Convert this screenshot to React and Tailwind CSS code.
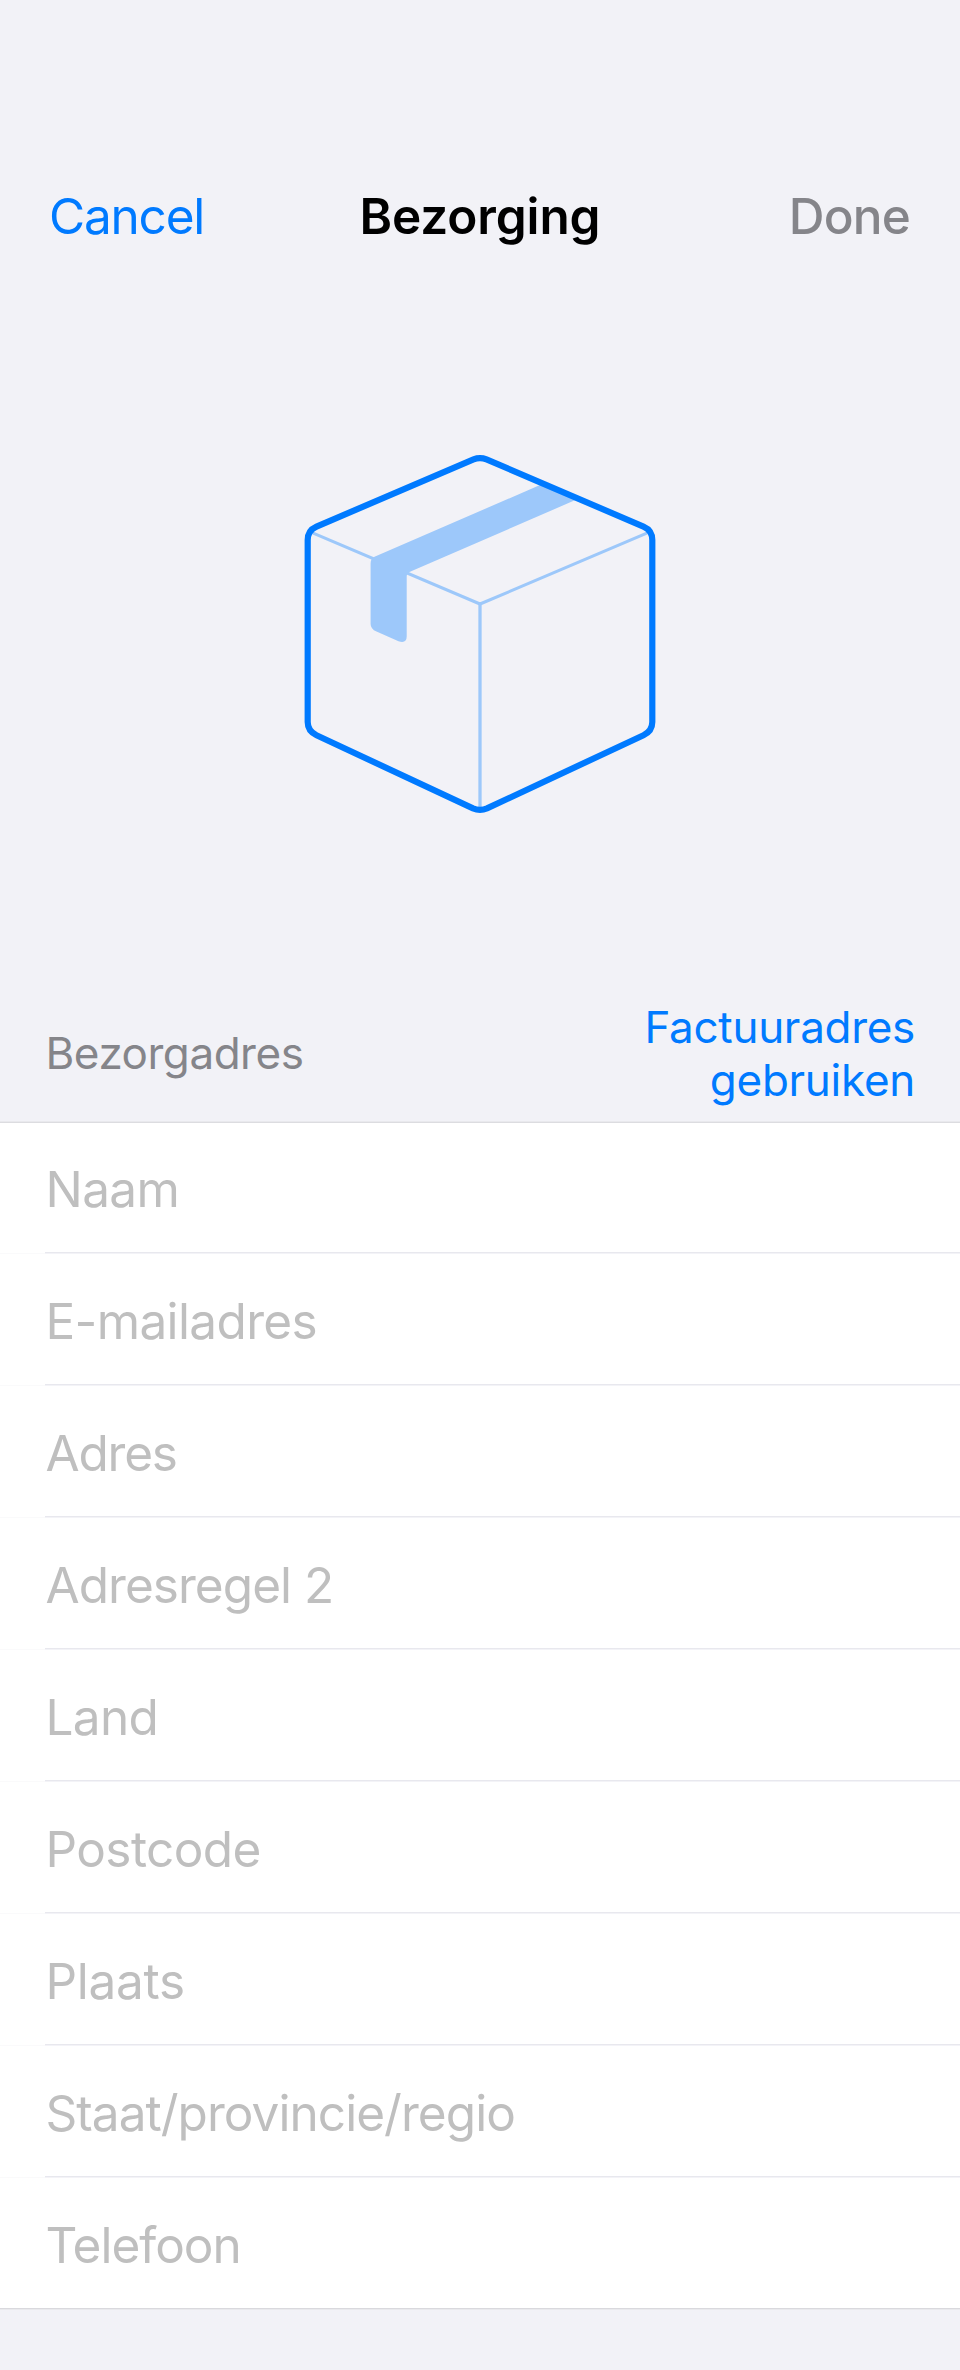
const fields = [
  { label: "Naam", tracking: "tracking-[-0.63px]" },
  { label: "E-mailadres", tracking: "tracking-[-0.64px]" },
  { label: "Adres", tracking: "tracking-[-1.2px]" },
  { label: "Adresregel 2", tracking: "tracking-[-0.95px]" },
  { label: "Land", tracking: "tracking-[-0.68px]" },
  { label: "Postcode", tracking: "tracking-[-0.59px]" },
  { label: "Plaats", tracking: "tracking-[-0.28px]" },
  { label: "Staat/provincie/regio", tracking: "tracking-[-0.95px]" },
  { label: "Telefoon", tracking: "tracking-[-1px]" },
];

function Header() {
  return (
    <header className="grid h-[132px] grid-cols-[1fr_auto_1fr] items-center pr-[50px] pl-[49px] text-[49.5px]">
      <button className="justify-self-start tracking-[-1.2px] text-[#007aff]">Cancel</button>
      <h1 className="pl-px font-semibold tracking-[-0.13px] text-black">Bezorging</h1>
      <button className="justify-self-end font-medium tracking-[-0.8px] text-[#85858a]">Done</button>
    </header>
  );
}

function BoxIllustration() {
  return (
    <svg className="h-[360px] w-[352px]" viewBox="304 454 352 360" fill="none">
      <g stroke="#9dc8fa" strokeWidth="3">
        <path d="M312 532.7 L480 604 L648 532.7" />
        <path d="M480 603 V809" strokeWidth="3.3" />
      </g>
      <path
        fill="#9dc8fa"
        d="M540 485 L374.5 556.8 Q370.6 558.6 370.6 563.5 V624 Q370.6 629 376.5 631.6 L398.5 641.3 Q406.7 643.8 406.7 636.5 V576.5 Q406.7 573.2 410 571.8 L576 499.8 Z"
      />
      <path
        stroke="#007aff"
        strokeWidth="6.2"
        d="M473.5 459.4 Q480 456.9 486.5 459.4 L643.5 526.6 C649 529 652.3 534 652.3 540 V722 C652.3 728 649 732.6 643.5 735.2 L487 808.4 Q480 811.2 473 808.4 L316.5 735.2 C311 732.6 307.7 728 307.7 722 V540 C307.7 534 311 529 316.5 526.6 Z"
      />
    </svg>
  );
}

function Field({ label, tracking }) {
  return (
    <li className="group flex h-[132px] flex-col bg-white first:h-[131px]">
      <div className="flex flex-1 items-center pt-1 pl-[45.5px] text-[49.5px] text-[#bfbfbf] group-first:pt-[3px]">
        <span className={tracking}>{label}</span>
      </div>
      <div className="ml-[45px] h-px bg-[#e8e8ee] group-last:ml-0 group-last:bg-[#d9d9dd]" />
      <div className="h-px border-l-[45px] border-[#fafafb] bg-[#f3f3f7] group-last:border-l-0 group-last:bg-[#e9e9ed]" />
    </li>
  );
}

export default function App() {
  return (
    <div className="flex min-h-[2370px] flex-col bg-[#f2f2f7] pt-[150px] font-['Inter',sans-serif]">
      <Header />
      <div className="flex h-[703px] justify-center pt-[172px]">
        <BoxIllustration />
      </div>
      <div className="flex h-[136px] items-center justify-between pr-[45px] pl-[45.5px] text-[44px] leading-[53px]">
        <h2 className="tracking-[-0.46px] text-[#85858a]">Bezorgadres</h2>
        <button className="pt-[2px] text-right text-[#007aff]">
          <span className="block tracking-[-0.3px]">Factuuradres</span>
          <span className="block tracking-[-0.27px]">gebruiken</span>
        </button>
      </div>
      <div className="h-px bg-[#e9e9ed]" />
      <div className="h-px bg-[#dcdce0]" />
      <ul>
        {fields.map((field) => (
          <Field key={field.label} {...field} />
        ))}
      </ul>
    </div>
  );
}
